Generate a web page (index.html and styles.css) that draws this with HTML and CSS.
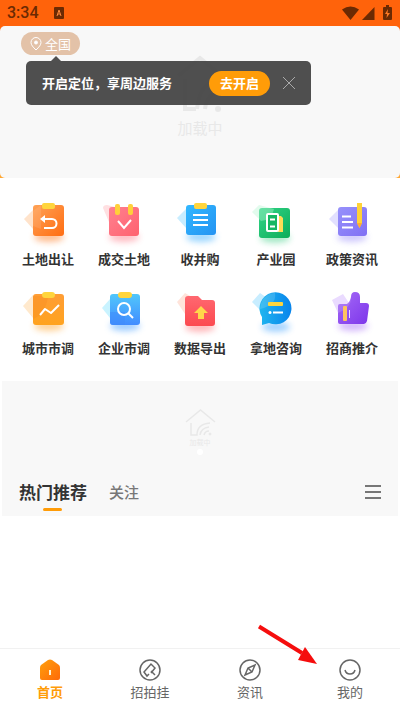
FILE: index.html
```html
<!DOCTYPE html>
<html lang="zh-CN">
<head>
<meta charset="utf-8">
<meta name="viewport" content="width=device-width, initial-scale=1">
<title>首页</title>
<link rel="stylesheet" href="styles.css">
</head>
<body>
<svg class="defs" aria-hidden="true">
  <defs>
    <linearGradient id="orange" x1="0" y1="0" x2="1" y2="1"><stop offset="0" stop-color="#ffa256"/><stop offset="1" stop-color="#ff6d12"/></linearGradient>
    <linearGradient id="pink" x1="0" y1="0" x2="1" y2="1"><stop offset="0" stop-color="#ff8190"/><stop offset="1" stop-color="#ff626f"/></linearGradient>
    <linearGradient id="blue" x1="0" y1="0" x2="1" y2="1"><stop offset="0" stop-color="#31b8ff"/><stop offset="1" stop-color="#2493f2"/></linearGradient>
    <linearGradient id="green" x1="0" y1="0" x2="1" y2="1"><stop offset="0" stop-color="#32d487"/><stop offset="1" stop-color="#0dad59"/></linearGradient>
    <linearGradient id="violet" x1="0" y1="0" x2="1" y2="1"><stop offset="0" stop-color="#9691fb"/><stop offset="1" stop-color="#8170f4"/></linearGradient>
    <linearGradient id="amber" x1="0" y1="0" x2="0" y2="1"><stop offset="0" stop-color="#ff9d35"/><stop offset="1" stop-color="#ffa31f"/></linearGradient>
    <linearGradient id="sky" x1="0" y1="0" x2="0" y2="1"><stop offset="0" stop-color="#51c7fb"/><stop offset="1" stop-color="#418cff"/></linearGradient>
    <linearGradient id="red" x1="0" y1="0" x2="0" y2="1"><stop offset="0" stop-color="#ff6870"/><stop offset="1" stop-color="#fc4950"/></linearGradient>
    <linearGradient id="azure" x1="0" y1="0" x2="1" y2="0"><stop offset="0" stop-color="#20b6ef"/><stop offset="1" stop-color="#0884ec"/></linearGradient>
    <linearGradient id="purple" x1="0" y1="0" x2="1" y2="1"><stop offset="0" stop-color="#a66cf7"/><stop offset="1" stop-color="#7d35ea"/></linearGradient>
    <linearGradient id="home" x1="0" y1="0" x2="1" y2="1"><stop offset="0" stop-color="#ffa00b"/><stop offset="1" stop-color="#ff6a0a"/></linearGradient>
    <filter id="glow" x="-50%" y="-100%" width="200%" height="300%"><feGaussianBlur stdDeviation="3"/></filter>
    <symbol id="house" viewBox="0 0 48 60">
      <g fill="none" stroke="currentColor" stroke-width="4">
        <path d="M2 21 24 3l22 18"/>
        <path d="M9 24v30h11"/>
        <path d="M21 54c2-18 9-27 20-28"/>
        <path d="M29 54c1-10 5-15 13-17"/>
      </g>
      <circle cx="42" cy="54" r="3" fill="currentColor"/>
    </symbol>
  </defs>
</svg>

<header class="status">
  <span class="time">3:34</span>
  <svg class="status-app" width="12" height="12" viewBox="0 0 12 12" aria-hidden="true"><rect x="1" width="10" height="12" rx="1" fill="#6b2a03"/><path d="M4 9 6 3l2 6M5 7h2" fill="none" stroke="#ff8a3c"/></svg>
  <svg class="status-icons" width="52" height="16" viewBox="0 0 52 16" fill="#6b2a03" aria-hidden="true">
    <path d="M1 4.500Q9.500-1.500 18 4.500L9.500 15Z"/>
    <path d="M33.500 2v13H21Z"/>
    <path d="M43 2h2V0h3v2h2q1 0 1 1v11q0 1-1 1h-7q-1 0-1-1V3q0-1 1-1Z"/>
    <path d="m47 4-3 5h2l-.5 4 3.500-5h-2.500Z" fill="#ff7a24"/>
  </svg>
</header>

<main>
  <section class="hero-wrap">
    <div class="hero">
      <button class="city" type="button">
        <svg width="12" height="14" viewBox="0 0 12 14" fill="none" stroke="#fff" aria-hidden="true"><path d="M6 13C3 10 1 8 1 5.500a5 5 0 0 1 10 0C11 8 9 10 6 13Z"/><circle cx="6" cy="5.500" r="1.500" fill="#fff"/></svg>
        全国
      </button>
      <div class="loading"><svg width="48" height="60"><use href="#house"/></svg><span>加载中</span></div>
      <div class="tip" role="dialog" aria-label="定位">
        <p>开启定位，享周边服务</p>
        <button class="tip-open" type="button">去开启</button>
        <button class="tip-close" type="button" aria-label="关闭"><svg width="12" height="12" viewBox="0 0 12 12" stroke="#aaa" fill="none"><path d="m0 0 12 12M12 0 0 12"/></svg></button>
      </div>
    </div>
  </section>

  <nav class="menu" aria-label="服务">
    <a href="#"><svg viewBox="0 0 56 52"><ellipse cx="29" cy="39" rx="15" ry="5" fill="#ff7a20" opacity=".5" filter="url(#glow)"/><path d="m4 21 9-9v19Z" fill="#ffe3cb"/><rect x="13" y="7" width="31" height="31" rx="3" fill="url(#orange)"/><path d="M13 13 21 7v24l-8-3Z" fill="#fff" opacity=".1"/><rect x="22" y="5" width="13" height="6" rx="2" fill="#ffd53d"/><path d="M23 21h9a4.500 4.500 0 0 1 0 9h-8" fill="none" stroke="#fff" stroke-width="2"/><path d="m20 21 5-4v8Z" fill="#fff"/></svg><span>土地出让</span></a>
    <a href="#"><svg viewBox="0 0 56 52"><ellipse cx="28" cy="39" rx="15" ry="5" fill="#ff5566" opacity=".4" filter="url(#glow)"/><path d="M7 10q0-3 4-3l8 2-6 15Z" fill="#ffe0e2"/><rect x="13" y="9" width="30" height="29" rx="3" fill="url(#pink)"/><rect x="19" y="6" width="5" height="11" rx="2" fill="#ffd03a"/><rect x="32" y="6" width="5" height="11" rx="2" fill="#ffd03a"/><path d="m22 23 6 7 7-8" fill="none" stroke="#fff" stroke-width="2"/></svg><span>成交土地</span></a>
    <a href="#"><svg viewBox="0 0 56 52"><ellipse cx="29" cy="39" rx="15" ry="5" fill="#3aaeff" opacity=".5" filter="url(#glow)"/><path d="m5 20 9-9v19Z" fill="#c8edff"/><rect x="14" y="7" width="30" height="30" rx="3" fill="url(#blue)"/><rect x="22" y="5" width="13" height="6" rx="2" fill="#ffd53d"/><path d="M21 17h15M21 22h15M21 27h15" stroke="#fff" stroke-width="2"/></svg><span>收并购</span></a>
    <a href="#"><svg viewBox="0 0 56 52"><ellipse cx="27" cy="40" rx="15" ry="5" fill="#19c56c" opacity=".4" filter="url(#glow)"/><rect x="11" y="10" width="31" height="30" rx="3" fill="url(#green)"/><path d="m4 14 7-7 15 4q-2 11-13 12Z" fill="#b7f4d3" opacity=".4"/><path d="M30 18h3l2 2v14h-5Z" fill="#ffdc57"/><rect x="19" y="16" width="11" height="17" rx="1" fill="#16b763" stroke="#fff" stroke-width="2"/><path d="M22 21.500h5M22 28.500h5" stroke="#fff" stroke-width="2"/></svg><span>产业园</span></a>
    <a href="#"><svg viewBox="0 0 56 52"><ellipse cx="28" cy="39" rx="15" ry="5" fill="#8677f8" opacity=".4" filter="url(#glow)"/><path d="m5 21 9-9v18Z" fill="#e2e0ff"/><rect x="14" y="9" width="29" height="29" rx="3" fill="url(#violet)"/><path d="M18 18.500h9M18 24h11M18 29.500h11" stroke="#fff" stroke-width="2"/><path d="M33 5h5v20l-2.500 5L33 25Z" fill="#ffd236"/><path d="M33 25h5l-2.500 5Z" fill="#ffab30"/></svg><span>政策资讯</span></a>
    <a href="#"><svg viewBox="0 0 56 52"><ellipse cx="29" cy="39" rx="15" ry="5" fill="#ffa52e" opacity=".5" filter="url(#glow)"/><path d="M3 19 13 8v23Z" fill="#ffe9cd"/><rect x="13" y="7" width="31" height="31" rx="3" fill="url(#amber)"/><path d="M13 9 28 9q-2 18-15 23Z" fill="#f58a1c" opacity=".35"/><rect x="22" y="5" width="13" height="6" rx="3" fill="#ffd53d"/><path d="m20 28 5-6 6 4 8-8" fill="none" stroke="#fff" stroke-width="2" stroke-linejoin="round"/></svg><span>城市市调</span></a>
    <a href="#"><svg viewBox="0 0 56 52"><ellipse cx="29" cy="39" rx="15" ry="5" fill="#3e9bff" opacity=".5" filter="url(#glow)"/><path d="m6 21 8-9v19Z" fill="#c9f3ff"/><rect x="14" y="7" width="30" height="31" rx="3" fill="url(#sky)"/><path d="M14 25h15v13H17q-3 0-3-3Z" fill="#3f8cfa" opacity=".5"/><rect x="22" y="5" width="14" height="6" rx="3" fill="#ffd53d"/><circle cx="28" cy="22" r="6" fill="none" stroke="#fff" stroke-width="2"/><path d="m32 26 5 5" stroke="#fff" stroke-width="2"/></svg><span>企业市调</span></a>
    <a href="#"><svg viewBox="0 0 56 52"><ellipse cx="28" cy="40" rx="15" ry="5" fill="#ff4a50" opacity=".4" filter="url(#glow)"/><path d="m5 15 8-9 7 4-7 17Z" fill="#ffe4db"/><path d="M13 12q0-3 3-3h10l4 4h10q3 0 3 3v20q0 3-3 3H16q-3 0-3-3Z" fill="url(#red)"/><path d="m29 19 7 7h-4v6h-6v-6h-4Z" fill="#ffd74a"/></svg><span>数据导出</span></a>
    <a href="#"><svg viewBox="0 0 56 52"><ellipse cx="28" cy="40" rx="14" ry="5" fill="#168fff" opacity=".4" filter="url(#glow)"/><path d="m4 15 8-9 10 7-8 12Z" fill="#c8edff"/><path d="M14 38V30A16 16 0 1 1 21 36Z" fill="url(#azure)"/><path d="M15 12Q20 6 27 6q2 12-15 16 0-5 3-10Z" fill="#fff" opacity=".15"/><rect x="20" y="15" width="15" height="4" rx="1" fill="#ffd53d"/><circle cx="22" cy="25.500" r="1.500" fill="#fff"/><path d="M25 25.500h10" stroke="#fff" stroke-width="2"/></svg><span>拿地咨询</span></a>
    <a href="#"><svg viewBox="0 0 56 52"><ellipse cx="29" cy="39" rx="15" ry="5" fill="#934cf5" opacity=".4" filter="url(#glow)"/><path d="m8 13 11-6 6 9-11 10Z" fill="#eadbff"/><path d="M14 19q0-2 2-2h7q3-2 4-7 0-5 4-5 5 0 5 5v6h6q3 0 3 3l-2 15q-1 3-3 3H16q-2 0-2-2Z" fill="url(#purple)"/><path d="M14 19q0-2 2-2h7l4-5q0 9-13 14Z" fill="#fff" opacity=".15"/><rect x="19" y="19" width="4" height="15" rx="1" fill="#ffc35e"/><path d="M25.500 23v8" stroke="#eadbff"/></svg><span>招商推介</span></a>
  </nav>

  <section class="feed">
    <div class="ad"><svg width="31" height="29" viewBox="0 0 31 29" fill="none" stroke="currentColor" aria-hidden="true"><path d="M1 14 15.500 2 30 14M6 15v12h6q0-11 13-12M15 27q1-7 9-8M19 27q1-4 5-4" stroke-width="1.500"/><circle cx="25" cy="26" r="1" fill="currentColor"/></svg><small>加载中</small><i class="dot"></i></div>
    <div class="tabs">
      <button class="tab active" type="button">热门推荐</button>
      <button class="tab" type="button">关注</button>
      <button class="list" type="button" aria-label="列表"><svg width="16" height="14" viewBox="0 0 16 14" stroke="#777" stroke-width="2"><path d="M0 1h16M0 7h16M0 13h16"/></svg></button>
    </div>
  </section>
</main>

<nav class="bottom" aria-label="主导航">
  <a class="current" href="#"><svg viewBox="0 0 22 22"><path d="M1 9q0-2 1-3l7-5q2-1 4 0l7 5q1 1 1 3v10q0 2-2 2H3q-2 0-2-2Z" fill="url(#home)"/><path d="M10 11h2v5h-2Z" fill="#fff3d5"/></svg><span>首页</span></a>
  <a href="#"><svg viewBox="0 0 22 22"><circle cx="11" cy="11" r="10"/><path d="M10 15 8 17 5 13l7-8 4 4-4 5M12 12l4 4"/></svg><span>招拍挂</span></a>
  <a href="#"><svg viewBox="0 0 22 22"><circle cx="11" cy="11" r="10"/><path d="M16 6 13 13 6 16 9 9ZM9 9l4 4"/></svg><span>资讯</span></a>
  <a href="#"><svg viewBox="0 0 22 22"><circle cx="11" cy="11" r="10"/><path d="M6 11q1 4 5 4t5-4"/></svg><span>我的</span></a>
  <svg class="pointer" width="62" height="42" viewBox="0 0 62 42" aria-hidden="true"><path d="M2 2.500 45 29" stroke="#f50d0d" stroke-width="4"/><path d="M60 40 41 36l7-13Z" fill="#f50d0d"/></svg>
</nav>
</body>
</html>
```
FILE: styles.css
```css
* {
  box-sizing: border-box;
}

body {
  margin: 0;
  min-height: 100vh;
  display: flex;
  flex-direction: column;
  background: #fff;
  color: #333;
  font-family: "Noto Sans CJK SC", sans-serif;
}

button {
  margin: 0;
  padding: 0;
  border: 0;
  background: none;
  color: inherit;
  font: inherit;
}

a {
  color: inherit;
  text-decoration: none;
}

svg {
  display: block;
}

.defs {
  position: absolute;
  width: 0;
  height: 0;
}

.status {
  display: flex;
  align-items: center;
  height: 26px;
  padding: 0 7px;
  background: #ff630b;
}

.time {
  color: #6b2a03;
  font: 500 16px/26px Roboto, sans-serif;
}

.status-app {
  margin-left: 14px;
}

.status-icons {
  margin-left: auto;
}

main {
  flex: 1;
}

.hero-wrap {
  background: linear-gradient(#ff630b, #ffa733);
}

.hero {
  position: relative;
  height: 152px;
  padding: 6px 21px;
  border-radius: 5px;
  background: #f8f8f8;
}

.city {
  display: flex;
  align-items: center;
  gap: 3px;
  height: 23px;
  padding: 0 9px;
  border-radius: 12px;
  background: #e3c2a8;
  color: #fff;
  font-size: 13px;
  line-height: 20px;
}

.loading {
  display: flex;
  flex-direction: column;
  align-items: center;
  gap: 3px;
  color: #e8e8e8;
  font-size: 15px;
  line-height: 20px;
}

.tip {
  position: absolute;
  top: 35px;
  left: 26px;
  display: flex;
  align-items: center;
  height: 44px;
  padding: 0 16px;
  border-radius: 5px;
  background: rgba(70, 70, 70, 0.95);
  color: #fff;
  font-size: 13px;
  font-weight: 700;
  line-height: 20px;
}

.tip::before {
  content: "";
  position: absolute;
  top: -5px;
  left: 25px;
  border: 5px solid transparent;
  border-top: 0;
  border-bottom-color: #505050;
}

.tip p {
  margin: 0;
}

.tip-open {
  height: 25px;
  margin-left: 37px;
  padding: 0 11px;
  border-radius: 13px;
  background: #ff9c08;
}

.tip-close {
  margin-left: 13px;
}

.menu {
  display: grid;
  grid-template-columns: repeat(5, 1fr);
  height: 203px;
  padding: 20px 10px 0;
  grid-auto-rows: 89px;
}

.menu a {
  display: flex;
  flex-direction: column;
  align-items: center;
  font-size: 13px;
  font-weight: 700;
  line-height: 18px;
}

.menu svg {
  width: 56px;
  height: 52px;
}

.feed {
  margin: 0 2px;
  background: #f8f8f8;
}

.ad {
  display: flex;
  flex-direction: column;
  align-items: center;
  height: 88px;
  padding-top: 27px;
  color: #e8e8e8;
}

.ad small {
  font-size: 7px;
  line-height: 10px;
}

.dot {
  width: 6px;
  height: 6px;
  margin-top: 2px;
  border-radius: 50%;
  background: #fff;
}

.tabs {
  display: flex;
  align-items: center;
  gap: 22px;
  height: 47px;
  padding: 0 17px 2px;
}

.tab {
  position: relative;
  color: #777;
  font-size: 15px;
  font-weight: 500;
  line-height: 24px;
}

.tab.active {
  color: #333;
  font-size: 17px;
  font-weight: 700;
}

.tab.active::after {
  content: "";
  position: absolute;
  bottom: -7px;
  left: 50%;
  width: 19px;
  height: 3px;
  margin-left: -10px;
  border-radius: 2px;
  background: #ff9c08;
}

.list {
  margin-left: auto;
}

.bottom {
  position: sticky;
  bottom: 0;
  display: grid;
  grid-template-columns: repeat(4, 1fr);
  height: 62px;
  border-top: 1px solid #f1f1f1;
  background: #fff;
}

.bottom a {
  display: flex;
  flex-direction: column;
  align-items: center;
  padding-top: 10px;
  color: #666;
  font-size: 13px;
  line-height: 22px;
}

.bottom a svg {
  width: 22px;
  height: 22px;
  fill: none;
  stroke: #666;
  stroke-width: 1.5;
}

.bottom .current {
  color: #ff9c08;
  font-weight: 700;
}

.bottom .current svg {
  stroke: none;
}

.pointer {
  position: absolute;
  top: -25px;
  right: 81px;
}
```
